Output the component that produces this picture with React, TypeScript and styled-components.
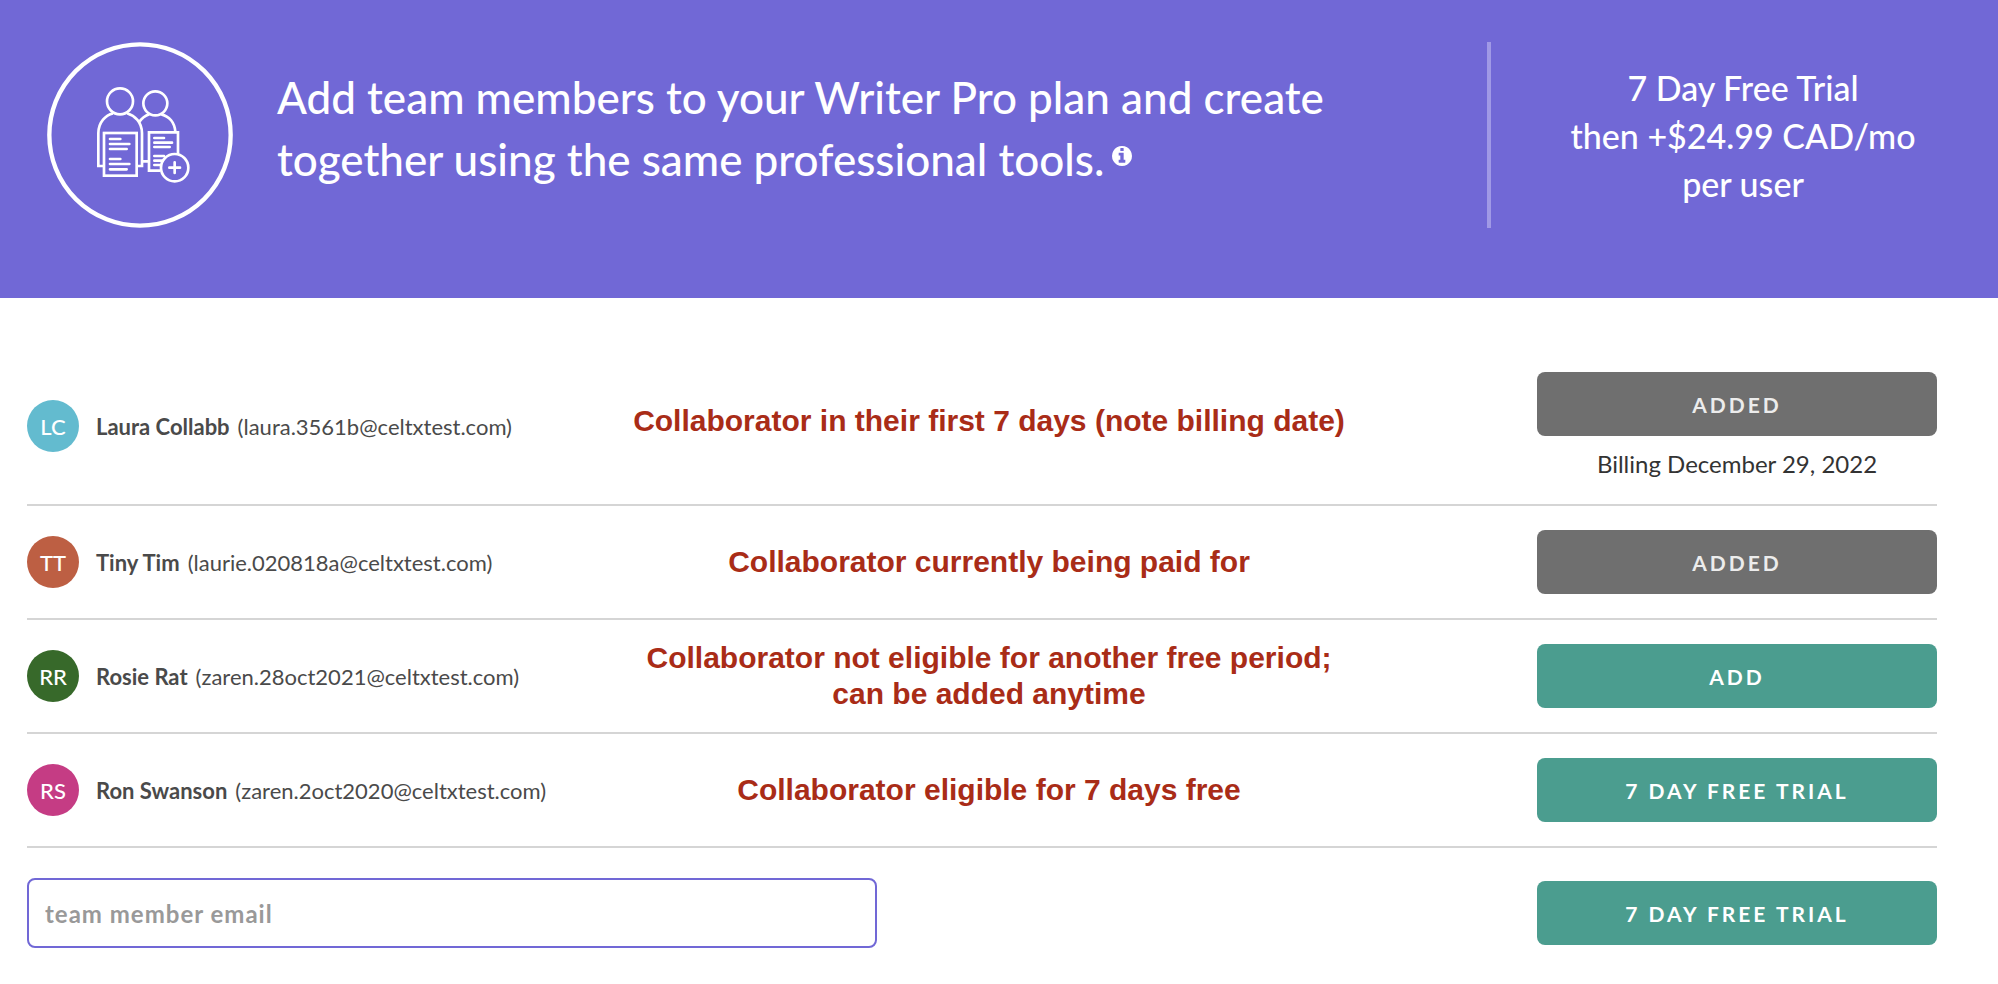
import React from "react";
import styled, { createGlobalStyle } from "styled-components";

const GlobalStyle = createGlobalStyle`
  *, *::before, *::after { box-sizing: border-box; }
  body {
    margin: 0;
    background: #ffffff;
    color: #4a4a4a;
    font-family: Lato, "Liberation Sans", sans-serif;
  }
`;

const Banner = styled.header`
  display: flex;
  align-items: flex-start;
  padding: 42px 27px 70px 47px;
  background: #7168d6;
  color: #ffffff;
  font-weight: 500;
`;

const TeamIcon = styled.svg`
  flex: none;
  width: 186px;
  height: 186px;
  fill: none;
  stroke: #ffffff;
  stroke-width: 8;
`;

const Headline = styled.h1`
  flex: 1;
  margin: 0;
  padding: 24px 40px 0 44px;
  font-size: 44px;
  line-height: 62px;
  font-weight: 500;
`;

const InfoButton = styled.button`
  margin: 0 0 0 8px;
  padding: 0;
  border: 0;
  background: none;
  color: inherit;
  line-height: 20px;
  vertical-align: 10px;
  cursor: pointer;

  svg { display: block; }
`;

const Price = styled.p`
  display: flex;
  flex-direction: column;
  flex: 0 0 484px;
  height: 186px;
  margin: 0;
  padding: 22px 0 0 24px;
  border-left: 4px solid #a099e6;
  font-size: 34px;
  line-height: 48px;
  text-align: center;
`;

const Main = styled.main`
  padding: 50px 61px 36px 27px;
`;

const Members = styled.ul`
  margin: 0;
  padding: 0;
  list-style: none;
`;

const Member = styled.li`
  display: grid;
  grid-template-columns: minmax(0, 2fr) minmax(0, 3fr) 400px;
  align-items: center;
  min-height: 114px;
  border-bottom: 2px solid #d5d5d5;
`;

const Person = styled.div`
  display: flex;
  align-items: center;
  font-size: 22px;
  line-height: 28px;
  white-space: nowrap;
`;

const Avatar = styled.span<{ $color: string }>`
  display: grid;
  place-items: center;
  width: 52px;
  height: 52px;
  margin-right: 17px;
  padding-top: 2px;
  border-radius: 50%;
  background: ${({ $color }) => $color};
  color: #ffffff;
  font-weight: 500;
`;

const Identity = styled.span`
  padding-top: 2px;
`;

const Email = styled.span`
  margin-left: 8px;
`;

const Note = styled.p<{ $raised: boolean }>`
  margin: 0;
  padding: 0 190px ${({ $raised }) => ($raised ? 10 : 0)}px 0;
  color: #a92c17;
  font-family: "Liberation Sans", Arial, sans-serif;
  font-size: 30px;
  line-height: 36px;
  font-weight: 700;
  text-align: center;
  white-space: pre-line;
`;

const Action = styled.div`
  padding: 24px 0;
`;

const ActionButton = styled.button`
  display: block;
  width: 400px;
  height: 64px;
  padding: 2px 0 0;
  border: 0;
  border-radius: 8px;
  background: #4b9d8f;
  color: #ffffff;
  font: 700 21px/26px Lato, "Liberation Sans", sans-serif;
  letter-spacing: 3px;
  text-transform: uppercase;
  cursor: pointer;

  &:disabled {
    background: #6f6f6f;
    color: #ececec;
    cursor: default;
  }
`;

const Billing = styled.p`
  margin: 12px 0 0;
  color: #333333;
  font-size: 24px;
  line-height: 32px;
  text-align: center;
`;

const InviteForm = styled.form`
  display: flex;
  align-items: center;
  justify-content: space-between;
  gap: 40px;
  padding-top: 30px;
`;

const EmailInput = styled.input`
  flex: 0 1 850px;
  min-width: 0;
  height: 70px;
  padding: 0 16px;
  border: 2px solid #7168d6;
  border-radius: 8px;
  background: #ffffff;
  color: #4a4a4a;
  font: 700 24px/32px Lato, "Liberation Sans", sans-serif;
  letter-spacing: 1px;

  &::placeholder { color: #999999; opacity: 1; }
`;

type MemberData = {
  initials: string;
  color: string;
  name: string;
  email: string;
  note: string;
  action: string;
  added?: boolean;
  billing?: string;
};

const members: MemberData[] = [
  { initials: "LC", color: "#63bbcf", name: "Laura Collabb", email: "laura.3561b@celtxtest.com", note: "Collaborator in their first 7 days (note billing date)", action: "Added", added: true, billing: "Billing December 29, 2022" },
  { initials: "TT", color: "#bd5f43", name: "Tiny Tim", email: "laurie.020818a@celtxtest.com", note: "Collaborator currently being paid for", action: "Added", added: true },
  { initials: "RR", color: "#37692a", name: "Rosie Rat", email: "zaren.28oct2021@celtxtest.com", note: "Collaborator not eligible for another free period;\ncan be added anytime", action: "Add" },
  { initials: "RS", color: "#c53c84", name: "Ron Swanson", email: "zaren.2oct2020@celtxtest.com", note: "Collaborator eligible for 7 days free", action: "7 day free trial" },
];

const TeamDrawing = () => (
  <TeamIcon viewBox="51 36 558 558" aria-hidden="true">
    <circle cx="330" cy="315" r="272" strokeWidth="13" />
    <circle cx="270" cy="214" r="39" />
    <circle cx="376" cy="220" r="36" />
    <path d="M219 408H205V310C205 276 228 255 249 250M291 250C314 257 336 276 336 310V408H322" />
    <path d="M327 277C336 264 346 257 358 253M394 253C418 259 434 278 436 305M338 394H354" />
    <rect x="222" y="309" width="98" height="128" />
    <path d="M390 422H357V307H444V372" />
    <path d="M240 327H271M240 342H298M240 357H290M240 387H271M240 402H298M240 418H290M373 324H402M373 338H426M373 351H419M373 378H402M373 392H397M373 405H391" strokeLinecap="round" />
    <circle cx="434" cy="413" r="41" />
    <path d="M434 397V429M418 413H450" strokeLinecap="round" />
  </TeamIcon>
);

const InfoIcon = () => (
  <svg width="20" height="20" viewBox="128 128 1536 1536" fill="currentColor" aria-hidden="true">
    <path d="M1152 1376v-160q0-14-9-23t-23-9h-96v-512q0-14-9-23t-23-9h-320q-14 0-23 9t-9 23v160q0 14 9 23t23 9h96v320h-96q-14 0-23 9t-9 23v160q0 14 9 23t23 9h448q14 0 23-9t9-23zM1024 480v-160q0-14-9-23t-23-9h-192q-14 0-23 9t-9 23v160q0 14 9 23t23 9h192q14 0 23-9t9-23zM1664 896q0 209-103 385.5t-279.5 279.5t-385.5 103t-385.5-103t-279.5-279.5t-103-385.5t103-385.5t279.5-279.5t385.5-103t385.5 103t279.5 279.5t103 385.5z" />
  </svg>
);

export default function App() {
  return (
    <>
      <GlobalStyle />
      <Banner>
        <TeamDrawing />
        <Headline>
          Add team members to your Writer Pro plan and create together using the same professional tools.
          <InfoButton type="button" aria-label="More information">
            <InfoIcon />
          </InfoButton>
        </Headline>
        <Price>
          <span>7 Day Free Trial</span>
          <span>then +$24.99 CAD/mo</span>
          <span>per user</span>
        </Price>
      </Banner>
      <Main>
        <Members>
          {members.map((m) => (
            <Member key={m.email}>
              <Person>
                <Avatar $color={m.color}>{m.initials}</Avatar>
                <Identity>
                  <strong>{m.name}</strong>
                  <Email>({m.email})</Email>
                </Identity>
              </Person>
              <Note $raised={Boolean(m.billing)}>{m.note}</Note>
              <Action>
                <ActionButton type="button" disabled={m.added}>{m.action}</ActionButton>
                {m.billing && <Billing>{m.billing}</Billing>}
              </Action>
            </Member>
          ))}
        </Members>
        <InviteForm onSubmit={(event) => event.preventDefault()}>
          <EmailInput type="email" aria-label="team member email" placeholder="team member email" />
          <ActionButton type="submit">7 day free trial</ActionButton>
        </InviteForm>
      </Main>
    </>
  );
}
